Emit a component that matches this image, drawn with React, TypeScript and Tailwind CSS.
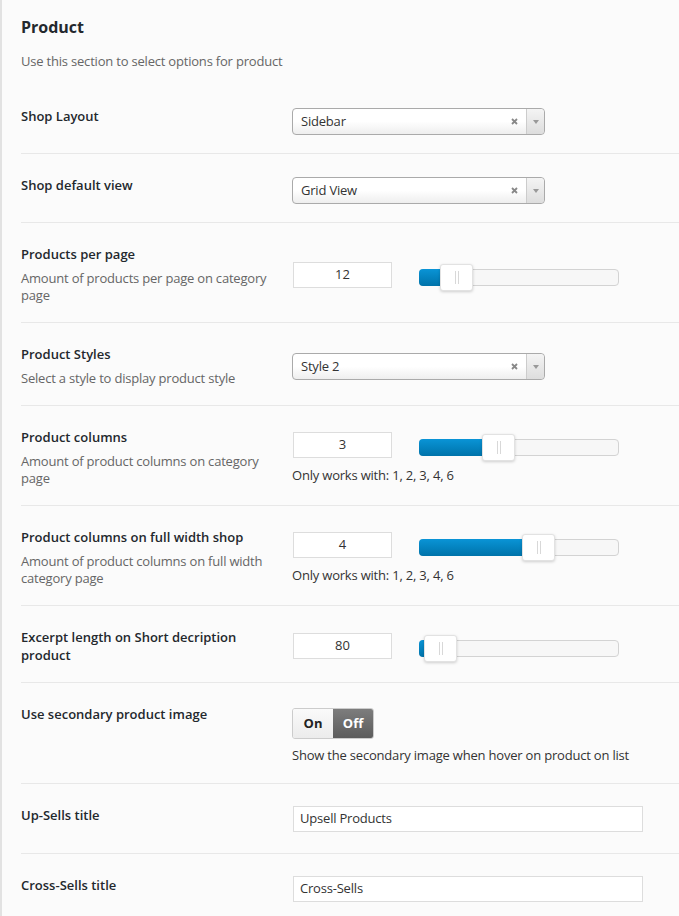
import React from "react";

interface SliderProps {
  value: string;
  handleLeft: number;
  note?: string;
}

const Select: React.FC<{ value: string }> = ({ value }) => (
  <div className="mt-[1px] flex h-[27px] w-[253px] items-stretch rounded-[4px] border border-[#aaaaaa] bg-gradient-to-b from-white from-50% to-[#eeeeee] text-[13px] tracking-[-0.2px] text-[#333]">
    <span className="flex flex-1 items-center pl-[8px]">{value}</span>
    <span className="flex w-[24px] items-center justify-center">
      <svg width="7" height="7" viewBox="0 0 7 7">
        <path d="M1 1 L6 6 M6 1 L1 6" stroke="#888" strokeWidth="1.8" />
      </svg>
    </span>
    <span className="flex w-[18px] items-center justify-center rounded-r-[4px] border-l border-[#cccccc] bg-gradient-to-b from-[#f4f4f4] to-[#dddddd]">
      <svg width="6" height="4" viewBox="0 0 6 4">
        <path d="M0 0 L6 0 L3 4 Z" fill="#999" />
      </svg>
    </span>
  </div>
);

const Slider: React.FC<SliderProps> = ({ value, handleLeft, note }) => (
  <div className="flex flex-col">
    <div className="flex items-center">
      <div className="ml-[1px] flex h-[26px] w-[99px] items-center justify-center border border-[#dddddd] bg-white text-[13px] text-[#333]">
        {value}
      </div>
      <div className="relative ml-[27px] mt-[5px] h-[17px] w-[200px] rounded-[4px] border border-[#d3d3d3] bg-[#f7f7f7]">
        <div
          className="absolute -left-[1px] -top-[1px] -bottom-[1px] rounded-l-[4px] bg-gradient-to-b from-[#0a94d6] to-[#0073aa]"
          style={{ width: handleLeft + 14 }}
        />
        <div
          className="absolute -top-[6px] flex h-[27px] w-[33px] items-center justify-center gap-[2px] rounded-[3px] border border-[#e2e2e2] bg-white shadow-[0_1px_3px_rgba(0,0,0,0.18)]"
          style={{ left: handleLeft - 1 }}
        >
          <span className="h-[13px] w-[1px] bg-[#d8d8d8]" />
          <span className="h-[13px] w-[1px] bg-[#d8d8d8]" />
        </div>
      </div>
    </div>
    {note && (
      <p className="mt-[9px] text-[13px] leading-[17px] tracking-[-0.2px] text-[#333]">
        {note}
      </p>
    )}
  </div>
);

const TextInput: React.FC<{ value: string }> = ({ value }) => (
  <div className="ml-[1px] mb-[3px] flex h-[26px] w-[350px] items-center border border-[#dddddd] bg-white pl-[6px] text-[13px] tracking-[-0.2px] text-[#333]">
    {value}
  </div>
);

const Row: React.FC<{
  title: string;
  desc?: string;
  children: React.ReactNode;
  last?: boolean;
}> = ({ title, desc, children, last }) => (
  <div
    className={
      "flex pt-[22px] pb-[18px] " + (last ? "" : "border-b border-[#e8e8e8]")
    }
  >
    <div className="w-[271px] shrink-0 self-start pr-[18px]">
      <h4 className="text-[13px] font-semibold leading-[18px] text-[#23282d]">
        {title}
      </h4>
      {desc && (
        <p className="mt-[7px] text-[13px] leading-[17px] tracking-[-0.2px] text-[#666]">
          {desc}
        </p>
      )}
    </div>
    <div className="flex flex-col justify-center">{children}</div>
  </div>
);

const App: React.FC = () => {
  return (
    <div className="min-h-[916px] border-l-2 border-[#e2e2e2] bg-[#fbfbfb] pl-[19px] font-['Open_Sans',sans-serif]">
      <h2 className="pt-[16px] text-[16px] font-bold leading-[22px] text-[#23282d]">
        Product
      </h2>
      <p className="mt-[15px] pb-[15px] text-[13px] leading-[17px] tracking-[-0.2px] text-[#666]">
        Use this section to select options for product
      </p>

      <Row title="Shop Layout">
        <Select value="Sidebar" />
      </Row>
      <Row title="Shop default view">
        <Select value="Grid View" />
      </Row>
      <Row
        title="Products per page"
        desc="Amount of products per page on category page"
      >
        <Slider value="12" handleLeft={21} />
      </Row>
      <Row
        title="Product Styles"
        desc="Select a style to display product style"
      >
        <Select value="Style 2" />
      </Row>
      <Row
        title="Product columns"
        desc="Amount of product columns on category page"
      >
        <Slider value="3" handleLeft={63} note="Only works with: 1, 2, 3, 4, 6" />
      </Row>
      <Row
        title="Product columns on full width shop"
        desc="Amount of product columns on full width category page"
      >
        <Slider value="4" handleLeft={103} note="Only works with: 1, 2, 3, 4, 6" />
      </Row>
      <Row title="Excerpt length on Short decription product">
        <Slider value="80" handleLeft={5} />
      </Row>
      <Row title="Use secondary product image">
        <div className="mt-[3px] flex h-[31px] w-[82px] overflow-hidden rounded-[3px] border border-[#cccccc] text-[13px] font-bold">
          <span className="flex w-[40px] items-center justify-center bg-gradient-to-b from-[#fafafa] to-[#ececec] text-[#222]">
            On
          </span>
          <span className="flex flex-1 items-center justify-center bg-gradient-to-b from-[#7d7d7d] to-[#5c5c5c] text-white">
            Off
          </span>
        </div>
        <p className="mt-[8px] mb-[1px] text-[13px] leading-[17px] tracking-[-0.2px] text-[#333]">
          Show the secondary image when hover on product on list
        </p>
      </Row>
      <Row title="Up-Sells title">
        <TextInput value="Upsell Products" />
      </Row>
      <Row title="Cross-Sells title" last>
        <TextInput value="Cross-Sells" />
      </Row>
    </div>
  );
};

export default App;
